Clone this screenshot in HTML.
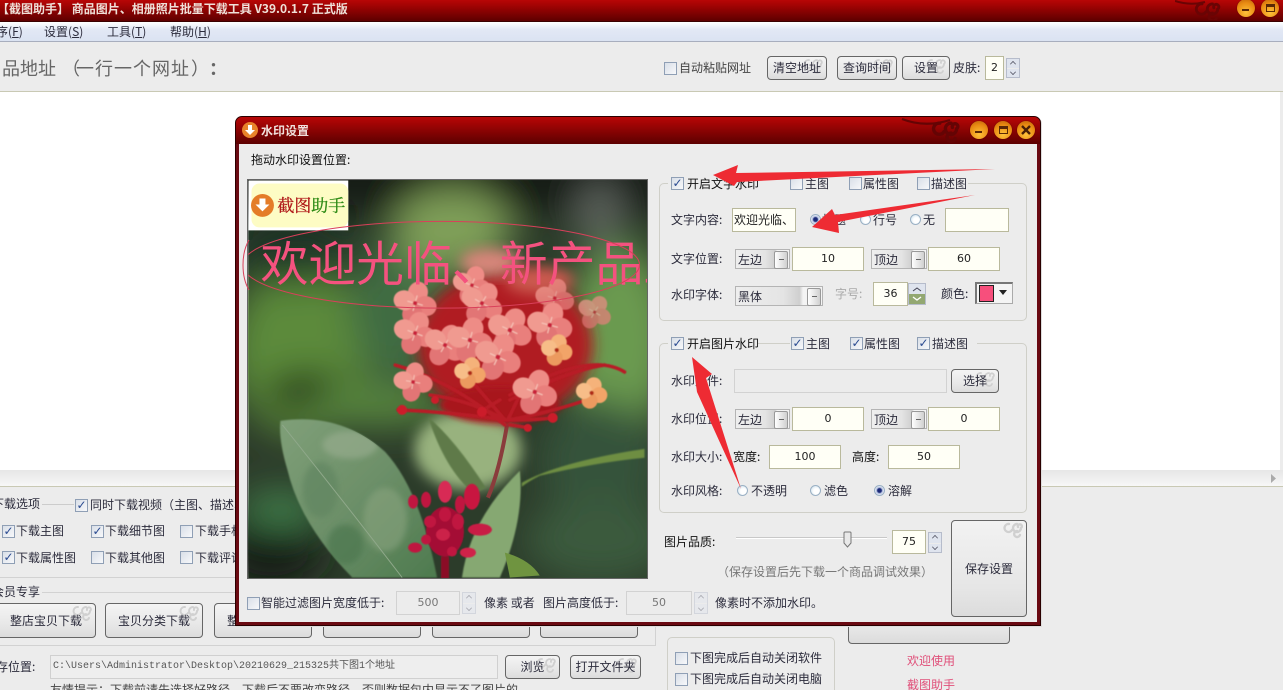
<!DOCTYPE html>
<html lang="zh"><head><meta charset="utf-8"><title>截图助手</title>
<style>
html,body{margin:0;padding:0;width:1283px;height:690px;overflow:hidden;background:#ececec}
body{position:relative;font:12px/14px "WenQuanYi Zen Hei","Noto Sans CJK SC","Liberation Sans",sans-serif;color:#2c2c3c}
.a,.t,.cb,.r,.in,.btn,.sel,.sp{position:absolute;box-sizing:border-box}
.t{white-space:nowrap;line-height:14px}
.n{font-family:"Noto Sans CJK SC","Liberation Sans",sans-serif}
.h{font-size:18px;line-height:20px;color:#666;top:58px}
.cb{width:13px;height:13px;border:1px solid #8f9fb5;background:linear-gradient(135deg,#d9dfe8,#f7f8fa);color:#2a4a90;font:bold 12px/11px "DejaVu Sans",sans-serif;text-align:center}
.r{width:11px;height:11px;border-radius:50%;border:1px solid #9ab0c4;background:radial-gradient(circle at 60% 60%,#fff 35%,#c5dcea)}
.r.on{background:radial-gradient(circle,#1c2a78 0 30%,#a9b6da 45%,#eef2f8 70%)}
.in{background:#fffff6;border:1px solid #b9b99c;text-align:center;font:11px/22px "DejaVu Sans","Liberation Sans",sans-serif;color:#222}
.in.d{background:#ececec;border-color:#d2d2d2;color:#777}
.btn{z-index:0;border:1px solid #666;border-radius:4px;background:linear-gradient(#f4f4f4,#e8e8e8 60%,#dcdcdc);text-align:center;overflow:hidden}
.btn svg{position:absolute;right:0;top:0;z-index:-1}
.sel{height:20px;border:1px solid #b4b4b4;background:linear-gradient(90deg,#eee,#e4e4e4 55%,#cfcfcf 74%,#f4f4f4 78%);line-height:20px;padding-left:2px}
.sel:after{content:"";position:absolute;right:1px;top:1px;width:12px;height:16px;border:1px solid #999;border-radius:2px;background:linear-gradient(90deg,#fff,#d0d0d0)}
.sel:before{content:"";position:absolute;z-index:1;right:5px;top:9px;width:5px;height:1px;background:#666}
.sp{width:14px;background:#dfe4ee;border:1px solid #b6bccb}
.sp:before{content:"";position:absolute;left:0;right:0;top:50%;height:1px;background:#ececec}
.sp i{position:absolute;left:3px;width:5px;height:5px;border-left:1px solid #445;border-top:1px solid #445;transform:rotate(45deg) scale(.7)}
.sp i+i{transform:rotate(225deg) scale(.7)}
.sp.d{opacity:.45}
.g{position:absolute;box-sizing:border-box;border:1px solid #cfcfc8;border-radius:5px}
.m{position:absolute;background:#ececec}
.c{position:absolute;border-radius:50%;width:18px;height:18px;background:radial-gradient(circle at 50% 75%,#ffc23a,#e88a12 60%,#b85c08);box-shadow:0 0 1px #400}
.c b{position:absolute;left:5px;top:10px;width:7px;height:2px;background:#5a2806}
.c.x b{top:5px;height:8px;left:5px;width:9px;background:none;border:1px solid #5a2806;border-top-width:3px;box-sizing:border-box}
.c svg{position:absolute;left:4px;top:4px}
u{text-decoration:underline}
</style></head><body>
<svg width="0" height="0" style="position:absolute"><defs>
<g id="sw" fill="none" stroke-linecap="round"><path d="M15 3a4 4 0 1 0 4 4 2 2 0 1 0-3-1M7 3a4 4 0 1 0 3 6 M15 10a3 3 0 1 0 3 4"/></g>
<g id="f"><ellipse cx="0" cy="-11" rx="10" ry="11" fill="#ee8c86"/><ellipse cx="11" cy="0" rx="11" ry="10" fill="#e97f7c"/><ellipse cx="0" cy="11" rx="10" ry="11" fill="#e27474"/><ellipse cx="-11" cy="0" rx="11" ry="10" fill="#f09a90"/><path d="M0-8V8M-8 0H8" stroke="#f7c8bc" stroke-width="1"/><circle r="2.2" fill="#c8203a"/></g>
<g id="o"><ellipse cx="0" cy="-8" rx="8" ry="8" fill="#f5b27a"/><ellipse cx="8" cy="0" rx="8" ry="8" fill="#f2a468"/><ellipse cx="0" cy="8" rx="8" ry="8" fill="#ec9a5e"/><ellipse cx="-8" cy="0" rx="8" ry="8" fill="#f7bd88"/><circle r="2.2" fill="#b02a18"/></g>
<filter id="b20" x="-30%" y="-30%" width="160%" height="160%"><feGaussianBlur stdDeviation="18"/></filter>
<filter id="b8" x="-30%" y="-30%" width="160%" height="160%"><feGaussianBlur stdDeviation="7"/></filter>
<filter id="b3" x="-30%" y="-30%" width="160%" height="160%"><feGaussianBlur stdDeviation="3"/></filter>
<filter id="b1"><feGaussianBlur stdDeviation=".7"/></filter>
<filter id="b05"><feGaussianBlur stdDeviation=".5"/></filter>
<linearGradient id="lf" x1="0" y1="0" x2="1" y2="1"><stop offset="0" stop-color="#7f9f78"/><stop offset=".5" stop-color="#6c8f68"/><stop offset="1" stop-color="#4d7a4e"/></linearGradient>
<clipPath id="lc"><path d="M280 421Q340 412 385 452Q420 490 437 578H352Q300 525 287 470Q278 440 280 421Z"/></clipPath>
</defs></svg>

<!-- main title -->
<div class="a" style="left:0;top:0;width:1283px;height:22px;background:linear-gradient(#b80606,#9a0303 35%,#5e0000);border-bottom:1px solid #3a0000"></div>
<div class="t" style="left:-3px;top:2px;color:#efe0d8;font-weight:bold">【截图助手】 商品图片、相册照片批量下载工具 V39.0.1.7 正式版</div>
<svg class="a" style="left:1175px;top:0" width="70" height="20"><use href="#sw" stroke="#6a0404" stroke-width="2.2" transform="translate(18,0) scale(1.3)"/><path d="M0 1Q15 6 30 2" stroke="#6a0404" stroke-width="2" fill="none"/></svg>
<div class="c" style="left:1237px;top:-1px"><b></b></div>
<div class="c x" style="left:1261px;top:-1px"><b></b></div>

<!-- menu -->
<div class="a" style="left:0;top:22px;width:1283px;height:20px;background:linear-gradient(#fff,#e2e8f5 40%,#dbe3f2);border-bottom:1px solid #a8aebe"></div>
<div class="t" style="left:-4px;top:25px">序(<u>F</u>)</div>
<div class="t" style="left:44px;top:25px">设置(<u>S</u>)</div>
<div class="t" style="left:107px;top:25px">工具(<u>T</u>)</div>
<div class="t" style="left:170px;top:25px">帮助(<u>H</u>)</div>

<!-- toolbar -->
<div class="t n h" style="left:2px">品地址</div>
<div class="t n h" style="left:62px">（</div>
<div class="t n h" style="left:76px;letter-spacing:1px">一行一个网址</div>
<div class="t n h" style="left:191px">）</div>
<div class="t n h" style="left:209px;font-weight:bold">：</div>
<div class="cb" style="left:664px;top:62px"></div><div class="t" style="left:679px;top:61px;color:#444">自动粘贴网址</div>
<div class="btn" style="left:767px;top:56px;width:60px;height:24px;line-height:22px">清空地址<svg width="24" height="18"><use href="#sw" stroke="#d0d0d0" stroke-width="1.8"/></svg></div>
<div class="btn" style="left:837px;top:56px;width:60px;height:24px;line-height:22px">查询时间<svg width="24" height="18"><use href="#sw" stroke="#d0d0d0" stroke-width="1.8"/></svg></div>
<div class="btn" style="left:902px;top:56px;width:48px;height:24px;line-height:22px">设置<svg width="24" height="18"><use href="#sw" stroke="#d0d0d0" stroke-width="1.8"/></svg></div>
<div class="t" style="left:953px;top:61px">皮肤:</div>
<div class="in" style="left:985px;top:56px;width:19px;height:24px;line-height:22px">2</div>
<div class="sp" style="left:1006px;top:58px;height:20px"><i style="top:2px"></i><i style="bottom:2px"></i></div>

<!-- white area -->
<div class="a" style="left:0;top:91px;width:1283px;height:1px;background:#c9c9b4"></div>
<div class="a" style="left:0;top:92px;width:1280px;height:378px;background:#fff"></div>
<div class="a" style="left:0;top:470px;width:1283px;height:17px;background:linear-gradient(#e6e6e6,#f7f7f7);border-bottom:1px solid #c9c9b4"></div>
<svg class="a" style="left:1270px;top:473px" width="8" height="11"><path d="M1 1l5 4.500-5 4.500z" fill="#aaa"/></svg>

<!-- bottom left -->
<div class="t" style="left:-8px;top:497px">下载选项</div>
<div class="a" style="left:42px;top:504px;width:32px;height:1px;background:#ccc"></div>
<div class="cb" style="left:75px;top:499px">✓</div><div class="t n" style="left:90px;top:498px">同时下载视频（主图、描述、</div>
<div class="cb" style="left:2px;top:525px">✓</div><div class="t" style="left:16px;top:524px">下载主图</div>
<div class="cb" style="left:91px;top:525px">✓</div><div class="t" style="left:105px;top:524px">下载细节图</div>
<div class="cb" style="left:180px;top:525px"></div><div class="t" style="left:195px;top:524px">下载手机</div>
<div class="cb" style="left:2px;top:551px">✓</div><div class="t" style="left:16px;top:551px">下载属性图</div>
<div class="cb" style="left:91px;top:551px"></div><div class="t" style="left:105px;top:551px">下载其他图</div>
<div class="cb" style="left:180px;top:551px"></div><div class="t" style="left:195px;top:551px">下载评论</div>
<div class="a" style="left:0;top:577px;width:235px;height:1px;background:#d2d2d2"></div>
<div class="t" style="left:-8px;top:585px">会员专享</div>
<div class="a" style="left:42px;top:592px;width:193px;height:1px;background:#d2d2d2"></div>
<div class="btn" style="left:-8px;top:603px;width:104px;height:35px;line-height:33px;padding-left:4px">整店宝贝下载<svg width="24" height="18"><use href="#sw" stroke="#d0d0d0" stroke-width="2"/></svg></div>
<div class="btn" style="left:105px;top:603px;width:98px;height:35px;line-height:33px">宝贝分类下载<svg width="24" height="18"><use href="#sw" stroke="#d0d0d0" stroke-width="2"/></svg></div>
<div class="btn" style="left:214px;top:603px;width:98px;height:35px;line-height:33px;text-align:left;padding-left:12px">整</div>
<div class="btn" style="left:323px;top:603px;width:98px;height:35px"></div>
<div class="btn" style="left:432px;top:603px;width:98px;height:35px"></div>
<div class="btn" style="left:540px;top:603px;width:98px;height:35px"></div>
<div class="a" style="left:0;top:645px;width:655px;height:1px;background:#d2d2d2"></div>
<div class="a" style="left:655px;top:626px;width:1px;height:20px;background:#d2d2d2"></div>
<div class="t" style="left:-4px;top:660px">存位置:</div>
<div class="in" style="left:50px;top:655px;width:448px;height:24px;background:#eee;border-color:#d0d0d0;text-align:left;padding-left:2px;font:10px/22px 'Liberation Mono','WenQuanYi Zen Hei',monospace;color:#555;white-space:nowrap;overflow:hidden">C:\Users\Administrator\Desktop\20210629_215325共下图1个地址</div>
<div class="btn" style="left:505px;top:655px;width:55px;height:24px;line-height:22px">浏览<svg width="24" height="18"><use href="#sw" stroke="#d0d0d0" stroke-width="1.8"/></svg></div>
<div class="btn" style="left:570px;top:655px;width:71px;height:24px;line-height:22px">打开文件夹<svg width="24" height="18"><use href="#sw" stroke="#d0d0d0" stroke-width="1.8"/></svg></div>
<div class="t" style="left:50px;top:683px;color:#444">友情提示：下载前请先选择好路径，下载后不要改变路径，否则数据包内显示不了图片的</div>

<!-- bottom right -->
<div class="g" style="left:667px;top:637px;width:168px;height:70px"></div>
<div class="cb" style="left:675px;top:652px"></div><div class="t" style="left:690px;top:651px">下图完成后自动关闭软件</div>
<div class="cb" style="left:675px;top:673px"></div><div class="t" style="left:690px;top:672px">下图完成后自动关闭电脑</div>
<div class="btn" style="left:848px;top:600px;width:162px;height:44px"></div>
<div class="t" style="left:907px;top:654px;color:#e0507a">欢迎使用</div>
<div class="t" style="left:907px;top:678px;color:#e0507a">截图助手</div>

<!-- dialog -->
<div class="a" style="left:235px;top:116px;width:806px;height:510px;background:#6a0a12;border-radius:7px 7px 0 0;border:1px solid #2a0000;box-shadow:1px 1px 0 #ddd"></div>
<div class="a" style="left:236px;top:117px;width:804px;height:27px;border-radius:6px 6px 0 0;background:linear-gradient(#b80606,#980404 35%,#5c0000)"></div>
<svg class="a" style="left:900px;top:116px" width="80" height="27"><use href="#sw" stroke="#640404" stroke-width="2.4" transform="translate(30,3) scale(1.4)"/><path d="M2 3Q25 12 50 4" stroke="#640404" stroke-width="2.2" fill="none"/></svg>
<svg class="a" style="left:242px;top:122px" width="17" height="17"><circle cx="8" cy="8" r="8" fill="#e8822a"/><path d="M6 3h4v5h3l-5 5-5-5h3z" fill="#fff"/></svg>
<div class="t" style="left:261px;top:124px;color:#f0e0dc;font-weight:bold">水印设置</div>
<div class="c" style="left:970px;top:121px"><b></b></div>
<div class="c x" style="left:994px;top:121px"><b></b></div>
<div class="c" style="left:1017px;top:121px"><svg width="10" height="10"><path d="M1 1l8 8M9 1l-8 8" stroke="#4a2006" stroke-width="2.4"/></svg></div>
<div class="a" style="left:239px;top:144px;width:798px;height:478px;background:#ececec"></div>
<div class="t" style="left:251px;top:153px;color:#111">拖动水印设置位置:</div>

<!-- photo -->
<svg class="a" style="left:247px;top:179px;border:1px solid #666" width="401" height="400" viewBox="247.500 179.500 400 399">
<rect x="248" y="180" width="400" height="399" fill="#2c3c2a"/>
<g filter="url(#b20)">
<ellipse cx="300" cy="350" rx="70" ry="85" fill="#5c8a3a"/>
<ellipse cx="400" cy="310" rx="50" ry="70" fill="#3f6c42"/>
<ellipse cx="620" cy="340" rx="55" ry="95" fill="#6a9a50"/>
<ellipse cx="600" cy="460" rx="60" ry="60" fill="#35523a"/>
<ellipse cx="600" cy="540" rx="75" ry="42" fill="#3a5a3c"/>
<ellipse cx="270" cy="550" rx="50" ry="40" fill="#141e18"/>
<ellipse cx="310" cy="392" rx="45" ry="18" fill="#10180f"/>
<ellipse cx="380" cy="405" rx="70" ry="20" fill="#5a8a40"/>
<ellipse cx="280" cy="510" rx="40" ry="20" fill="#3f7a4a"/>
<rect x="190" y="130" width="520" height="85" fill="#161e18"/>
<ellipse cx="452" cy="230" rx="60" ry="42" fill="#7f9f58"/>
<ellipse cx="600" cy="215" rx="24" ry="35" fill="#5c625c"/>
<ellipse cx="290" cy="255" rx="55" ry="28" fill="#1e3428"/>
</g>
<ellipse cx="468" cy="450" rx="54" ry="40" fill="#98b27e" filter="url(#b8)"/>
<path d="M428 417Q455 440 486 488L474 494Q445 470 428 417Z" fill="#5e7a48" filter="url(#b1)"/>
<path d="M522 483Q560 462 645 449V458Q600 462 540 476Q528 482 522 487Z" fill="#6e8e42" filter="url(#b1)"/>
<path d="M280 421Q340 412 385 452Q420 490 437 578H352Q300 525 287 470Q278 440 280 421Z" fill="url(#lf)" filter="url(#b1)"/>
<g clip-path="url(#lc)"><g filter="url(#b3)"><ellipse cx="350" cy="445" rx="28" ry="14" fill="#95ab8c" opacity=".7"/><ellipse cx="320" cy="490" rx="18" ry="28" fill="#5f8460" opacity=".7"/><ellipse cx="385" cy="520" rx="22" ry="32" fill="#88a47e" opacity=".6"/><ellipse cx="345" cy="545" rx="18" ry="20" fill="#4c7650" opacity=".7"/></g></g>
<path d="M282 425Q350 510 402 578" stroke="#8fa88a" stroke-width="1" fill="none"/>
<path d="M520 471Q470 520 462 578H500Q525 520 520 471Z" fill="#86a872" filter="url(#b1)"/>
<path d="M505 553Q530 560 540 576L510 578Z" fill="#6f9440"/>
<path d="M508 420Q500 470 488 498" stroke="#8a3c3c" stroke-width="4" fill="none"/>
<g filter="url(#b05)">
<ellipse cx="445" cy="532" rx="19" ry="25" fill="#a40e34"/>
<g fill="#c01840"><ellipse cx="445" cy="492" rx="7" ry="11" fill="#d82a55"/><ellipse cx="413" cy="502" rx="5" ry="7"/><ellipse cx="426" cy="500" rx="5" ry="8"/><ellipse cx="472" cy="497" rx="8" ry="13" fill="#c81840"/><ellipse cx="460" cy="505" rx="5" ry="9"/><ellipse cx="480" cy="530" rx="12" ry="6" fill="#c81a44"/><ellipse cx="415" cy="548" rx="7" ry="5"/><ellipse cx="468" cy="553" rx="8" ry="5" fill="#d02048"/><ellipse cx="445" cy="515" rx="6" ry="7"/><ellipse cx="430" cy="522" rx="6" ry="6"/><ellipse cx="458" cy="522" rx="6" ry="8"/><ellipse cx="443" cy="535" rx="7" ry="6" fill="#cc2048"/><ellipse cx="426" cy="540" rx="5" ry="5"/><ellipse cx="452" cy="552" rx="5" ry="5"/></g>
<rect x="441" y="557" width="8" height="22" fill="#8a0a28"/>
</g>
<!-- cluster -->
<ellipse cx="505" cy="345" rx="88" ry="74" fill="#b01c24" filter="url(#b8)"/>
<ellipse cx="490" cy="262" rx="30" ry="14" fill="#d8867a" filter="url(#b8)"/>
<ellipse cx="540" cy="280" rx="35" ry="14" fill="#cc5a50" filter="url(#b8)"/>
<ellipse cx="500" cy="405" rx="60" ry="18" fill="#a8181f" filter="url(#b3)"/>
<g stroke="#b81c26" stroke-width="3.500" fill="none" stroke-linecap="round" filter="url(#b05)"><path d="M505 425Q450 380 395 365"/><path d="M505 420Q450 412 398 410"/><path d="M510 420Q560 410 592 398"/><path d="M510 400Q570 370 605 365"/><path d="M510 395Q590 350 625 372"/><path d="M505 420Q540 420 552 418"/><path d="M510 425L530 428"/><path d="M500 400L480 412"/><path d="M505 420Q470 400 430 395"/><path d="M505 420L475 385"/><path d="M508 420L520 395"/></g>
<g filter="url(#b05)">
<use href="#f" transform="translate(472,285) rotate(20) scale(.9)"/>
<use href="#f" transform="translate(555,298) rotate(15) scale(.9)" opacity=".75"/>
<use href="#f" transform="translate(595,312) rotate(30) scale(.8)" opacity=".7"/>
<use href="#f" transform="translate(415,303) rotate(15)"/>
<use href="#f" transform="translate(482,303) rotate(30)"/>
<use href="#f" transform="translate(415,333) rotate(20)"/>
<use href="#f" transform="translate(510,330) rotate(25) scale(1.05)"/>
<use href="#f" transform="translate(550,325) rotate(15) scale(1.05)"/>
<use href="#f" transform="translate(445,345) rotate(30)"/>
<use href="#f" transform="translate(470,340) rotate(15) scale(1.05)"/>
<use href="#f" transform="translate(498,357) rotate(25) scale(1.1)"/>
<use href="#o" transform="translate(557,350) rotate(15)"/>
<use href="#o" transform="translate(470,373) rotate(15)"/>
<use href="#f" transform="translate(535,392) rotate(20) scale(1.05)"/>
<use href="#o" transform="translate(592,393) rotate(15)"/>
<use href="#f" transform="translate(413,382) rotate(10) scale(.9)"/>
<g fill="#cc1e2a"><circle cx="402" cy="410" r="5"/><circle cx="482" cy="412" r="5"/><circle cx="553" cy="418" r="5"/><circle cx="528" cy="428" r="4"/><circle cx="435" cy="400" r="4"/></g>
</g>
<!-- watermark text -->
<text x="260" y="281" font-family="'WenQuanYi Zen Hei','Noto Sans CJK SC',sans-serif" font-size="48" fill="#f4527f">欢迎光临、新产品上</text>
<rect x="248" y="180" width="100" height="50" fill="#fff"/>
<rect x="251" y="183" width="97" height="44" rx="8" fill="#fdfcc4"/>
<circle cx="262" cy="205" r="11.500" fill="#e47c28"/>
<path d="M259 198h6v6h4l-7 7-7-7h4z" fill="#fff"/>
<text x="277" y="211" font-family="'Noto Serif CJK SC',serif" font-size="17" stroke-width=".3" fill="#b01818" stroke="#b01818">截图<tspan fill="#2c8a14" stroke="#2c8a14">助手</tspan></text>
<ellipse cx="441" cy="264.500" rx="199" ry="43.500" fill="none" stroke="#d9405a" stroke-width="1"/>
</svg>
<svg class="a" style="left:240px;top:215px" width="10" height="100"><path d="M3 50Q3 35 9 25M3 50Q3 65 9 75" stroke="#d9405a" fill="none"/></svg>

<!-- bottom filter -->
<div class="cb" style="left:247px;top:597px"></div><div class="t" style="left:261px;top:596px">智能过滤图片宽度低于:</div>
<div class="in d" style="left:396px;top:591px;width:64px;height:24px">500</div>
<div class="sp d" style="left:462px;top:592px;height:22px"><i style="top:2px"></i><i style="bottom:2px"></i></div>
<div class="t" style="left:484px;top:596px">像素 或者</div>
<div class="t" style="left:543px;top:596px">图片高度低于:</div>
<div class="in d" style="left:626px;top:591px;width:66px;height:24px">50</div>
<div class="sp d" style="left:694px;top:592px;height:22px"><i style="top:2px"></i><i style="bottom:2px"></i></div>
<div class="t" style="left:715px;top:596px">像素时不添加水印。</div>

<!-- group 1 -->
<div class="g" style="left:659px;top:183px;width:368px;height:138px"></div>
<div class="m" style="left:668px;top:178px;width:300px;height:12px"></div>
<div class="cb" style="left:671px;top:177px">✓</div><div class="t" style="left:687px;top:177px;color:#111">开启文字水印</div>
<div class="cb" style="left:790px;top:177px"></div><div class="t" style="left:805px;top:177px">主图</div>
<div class="cb" style="left:849px;top:177px"></div><div class="t" style="left:863px;top:177px">属性图</div>
<div class="cb" style="left:917px;top:177px"></div><div class="t" style="left:931px;top:177px">描述图</div>

<div class="t" style="left:671px;top:213px">文字内容:</div>
<div class="in" style="left:732px;top:208px;width:64px;height:24px;text-align:left;padding-left:1px;font:12px/22px 'WenQuanYi Zen Hei','Noto Sans CJK SC',sans-serif;overflow:hidden;white-space:nowrap">欢迎光临、</div>
<div class="r on" style="left:810px;top:214px"></div><div class="t" style="left:822px;top:213px">标题</div>
<div class="r" style="left:860px;top:214px"></div><div class="t" style="left:873px;top:213px">行号</div>
<div class="r" style="left:910px;top:214px"></div><div class="t" style="left:923px;top:213px">无</div>
<div class="in" style="left:945px;top:208px;width:64px;height:24px"></div>

<div class="t" style="left:671px;top:252px">文字位置:</div>
<div class="sel" style="left:735px;top:249px;width:55px">左边</div>
<div class="in" style="left:792px;top:247px;width:72px;height:24px">10</div>
<div class="sel" style="left:871px;top:249px;width:56px">顶边</div>
<div class="in" style="left:928px;top:247px;width:72px;height:24px">60</div>

<div class="t" style="left:671px;top:288px">水印字体:</div>
<div class="sel" style="left:735px;top:286px;width:88px">黑体</div>
<div class="t" style="left:835px;top:287px;color:#aaa">字号:</div>
<div class="in" style="left:873px;top:282px;width:35px;height:24px">36</div>
<div class="a" style="left:908px;top:283px;width:18px;height:22px;background:linear-gradient(#dfe4ee 50%,#93a872 50%);border:1px solid #b6bccb;box-sizing:border-box"></div>
<svg class="a" style="left:912px;top:286px" width="10" height="16"><path d="M1 5l4-3 4 3" fill="none" stroke="#445"/><path d="M1 11l4 3 4-3" fill="none" stroke="#fff" stroke-width="1.4"/></svg>
<div class="t" style="left:941px;top:287px">颜色:</div>
<div class="a" style="left:975px;top:282px;width:38px;height:22px;background:#f4f4f4;border:2px solid #777;border-right:1px solid #aaa;border-bottom:1px solid #aaa;box-sizing:border-box"></div>
<div class="a" style="left:979px;top:285px;width:15px;height:17px;background:#f74f7c;border:1px solid #222;box-sizing:border-box"></div>
<svg class="a" style="left:999px;top:290px" width="10" height="6"><path d="M0 0h8l-4 5z" fill="#222"/></svg>

<!-- group 2 -->
<div class="g" style="left:659px;top:343px;width:368px;height:170px"></div>
<div class="m" style="left:668px;top:338px;width:90px;height:12px"></div>
<div class="m" style="left:790px;top:338px;width:187px;height:12px"></div>
<div class="cb" style="left:671px;top:337px">✓</div><div class="t" style="left:687px;top:337px;color:#111">开启图片水印</div>
<div class="cb" style="left:791px;top:337px">✓</div><div class="t" style="left:806px;top:337px">主图</div>
<div class="cb" style="left:850px;top:337px">✓</div><div class="t" style="left:864px;top:337px">属性图</div>
<div class="cb" style="left:917px;top:337px">✓</div><div class="t" style="left:932px;top:337px">描述图</div>

<div class="t" style="left:671px;top:374px">水印文件:</div>
<div class="in d" style="left:734px;top:369px;width:213px;height:24px"></div>
<div class="btn" style="left:951px;top:369px;width:48px;height:24px;line-height:22px">选择<svg width="24" height="18"><use href="#sw" stroke="#d0d0d0" stroke-width="1.8"/></svg></div>

<div class="t" style="left:671px;top:412px">水印位置:</div>
<div class="sel" style="left:735px;top:409px;width:55px">左边</div>
<div class="in" style="left:792px;top:407px;width:72px;height:24px">0</div>
<div class="sel" style="left:871px;top:409px;width:56px">顶边</div>
<div class="in" style="left:928px;top:407px;width:72px;height:24px">0</div>

<div class="t" style="left:671px;top:450px">水印大小:</div>
<div class="t" style="left:733px;top:450px;color:#111">宽度:</div>
<div class="in" style="left:769px;top:445px;width:72px;height:24px">100</div>
<div class="t" style="left:852px;top:450px;color:#111">高度:</div>
<div class="in" style="left:888px;top:445px;width:72px;height:24px">50</div>

<div class="t" style="left:671px;top:484px">水印风格:</div>
<div class="r" style="left:737px;top:485px"></div><div class="t" style="left:751px;top:484px">不透明</div>
<div class="r" style="left:810px;top:485px"></div><div class="t" style="left:824px;top:484px">滤色</div>
<div class="r on" style="left:874px;top:485px"></div><div class="t" style="left:888px;top:484px">溶解</div>

<!-- quality -->
<div class="t" style="left:664px;top:535px;color:#111">图片品质:</div>
<div class="a" style="left:736px;top:537px;width:151px;height:2px;background:#c8c8c8;border-bottom:1px solid #fff"></div>
<svg class="a" style="left:843px;top:531px" width="10" height="17"><path d="M1 2q0-1 1-1h5q1 0 1 1v10l-3.500 4-3.500-4z" fill="#e9e9e9" stroke="#777"/></svg>
<div class="in" style="left:892px;top:530px;width:34px;height:24px">75</div>
<div class="sp" style="left:928px;top:532px;height:21px"><i style="top:2px"></i><i style="bottom:2px"></i></div>
<div class="t n" style="left:717px;top:565px;color:#777">（保存设置后先下载一个商品调试效果）</div>
<div class="btn" style="left:951px;top:520px;width:76px;height:97px;line-height:95px;background:linear-gradient(#f2f2f2,#e6e6e6 70%,#dcdcdc)">保存设置<svg width="24" height="18"><use href="#sw" stroke="#d0d0d0" stroke-width="2.4"/></svg></div>

<!-- arrows -->
<svg class="a" style="left:0;top:0;pointer-events:none" width="1283" height="690">
<path d="M713 175L738 165 736 173 995 169 737 182 734 186Z" fill="#ee2b33"/>
<path d="M812 227L832 209 835 215 975 195 838 222 839 233Z" fill="#ee2b33"/>
<path d="M692 357L712 374 706 378 741 489 697 392Z" fill="#ee2b33"/>
</svg>
</body></html>
